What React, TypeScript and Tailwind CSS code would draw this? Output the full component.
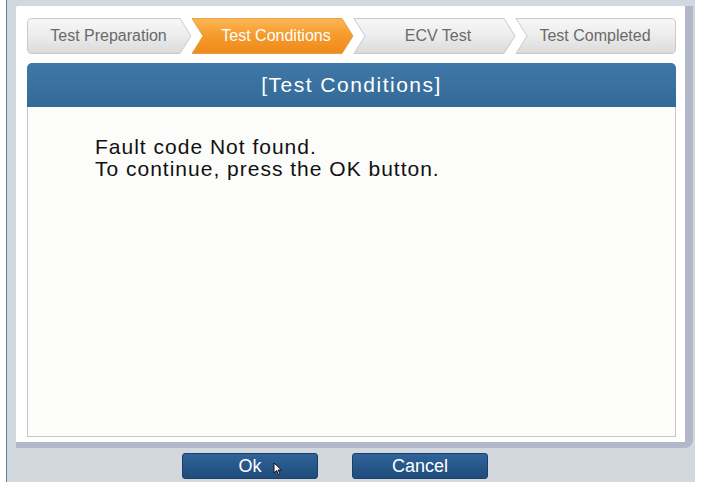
import React from "react";

function TabBar() {
  const grey = "url(#tabGrey)";
  return (
    <div className="relative w-[649px] h-[36px]">
      <svg className="absolute inset-0" width="649" height="36" viewBox="0 0 649 36">
        <defs>
          <linearGradient id="tabGrey" x1="0" y1="0" x2="0" y2="1">
            <stop offset="0" stopColor="#f7f7f7" />
            <stop offset="0.5" stopColor="#ececec" />
            <stop offset="1" stopColor="#dadada" />
          </linearGradient>
          <linearGradient id="tabOrange" x1="0" y1="0" x2="0" y2="1">
            <stop offset="0" stopColor="#fbb655" />
            <stop offset="0.5" stopColor="#f59a2c" />
            <stop offset="1" stopColor="#ee8a18" />
          </linearGradient>
        </defs>
        <path d="M5,0.5 H153 L164,18 L153,35.5 H5 Q0.5,35.5 0.5,31 V5 Q0.5,0.5 5,0.5 Z" fill={grey} stroke="#c9c9c9" />
        <path d="M165,0.5 H315 L326,18 L315,35.5 H165 L176,18 Z" fill="url(#tabOrange)" stroke="#e9a04c" />
        <path d="M327,0.5 H477 L488,18 L477,35.5 H327 L338,18 Z" fill={grey} stroke="#c9c9c9" />
        <path d="M489,0.5 H644 Q648.5,0.5 648.5,5 V31 Q648.5,35.5 644,35.5 H489 L500,18 Z" fill={grey} stroke="#c9c9c9" />
      </svg>
      <div className="relative flex h-full items-center text-[16px] text-[#6a6a6a] [font-family:'Liberation_Sans',Arial,sans-serif]">
        <div className="w-[163px] text-center">Test Preparation</div>
        <div className="w-[172px] text-center text-white">Test Conditions</div>
        <div className="w-[152px] text-center">ECV Test</div>
        <div className="w-[162px] text-center">Test Completed</div>
      </div>
    </div>
  );
}

function Cursor() {
  return (
    <svg className="absolute left-[90px] top-[8px]" width="10" height="14" viewBox="0 0 10 14">
      <path d="M1,1 L1,11 L3.5,8.5 L5.5,12.5 L7,11.8 L5,8 L8.5,8 Z" fill="#ffffff" stroke="#111" strokeWidth="1" strokeLinejoin="round" />
    </svg>
  );
}

export default function App() {
  return (
    <div className="w-[701px] h-[490px] bg-white [font-family:'Liberation_Sans',Arial,sans-serif]">
      <div className="ml-[6px] w-[689px] h-[482px] border-l border-[#5f7b98] bg-[#d3d8df] flex flex-col">
        <div className="ml-[9px] mt-[6px] w-[677px] h-[442px] bg-white rounded-br-[8px] rounded-tl-[2px] border-r-[8px] border-b-[6px] border-[#b2b7c9] pl-[11px] pt-[12px] flex flex-col">
          <TabBar />
          <div className="mt-[9px] w-[649px] h-[44px] rounded-t-[5px] bg-gradient-to-b from-[#3f77a6] to-[#336a98] flex items-center justify-center text-white text-[21px] tracking-[1.5px]">
            [Test Conditions]
          </div>
          <div className="w-[649px] h-[330px] border border-t-0 border-[#c6c6c6] bg-[#fcfcfa] pl-[67px] pt-[29px] text-[21px] leading-[22px] tracking-[1px] text-[#111]">
            <div>Fault code Not found.</div>
            <div>To continue, press the OK button.</div>
          </div>
        </div>
        <div className="flex pl-[175px] pt-[5px] gap-[34px]">
          <div className="relative w-[136px] h-[26px] rounded-[3px] border border-[#1b3f68] bg-gradient-to-b from-[#2f639a] to-[#1f4c7c] flex items-center justify-center text-white text-[18px]">
            Ok
            <Cursor />
          </div>
          <div className="w-[136px] h-[26px] rounded-[3px] border border-[#1b3f68] bg-gradient-to-b from-[#2f639a] to-[#1f4c7c] flex items-center justify-center text-white text-[18px]">
            Cancel
          </div>
        </div>
      </div>
    </div>
  );
}
